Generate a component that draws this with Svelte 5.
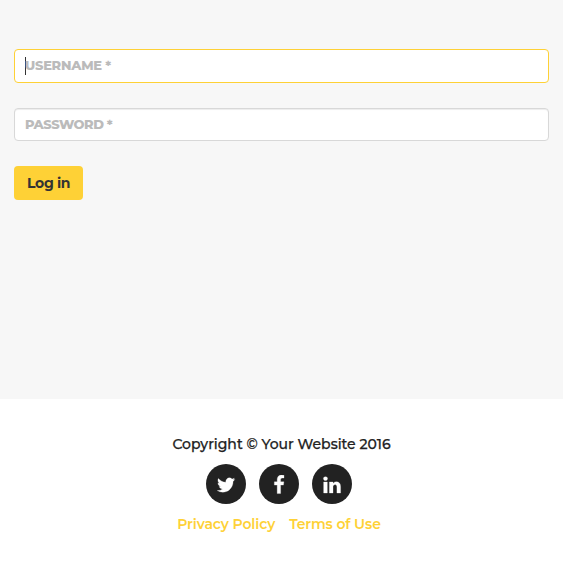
<script>
  const socials = [
    {
      name: 'Twitter',
      d: 'M1684 408q-67 98-162 167 1 14 1 42 0 130-38 259.5t-115.5 248.5-184.5 210.5-258 146-323 54.5q-271 0-496-145 35 4 78 4 225 0 401-138-105-2-188-64.5t-114-159.5q33 5 61 5 43 0 85-11-112-23-185.5-111.5t-73.5-205.5v-4q68 38 146 41-66-44-105-115t-39-154q0-88 44-163 121 149 294.5 238.5t371.5 99.5q-8-38-8-74 0-134 94.5-228.5t228.5-94.5q140 0 236 102 109-21 205-78-37 115-142 178 93-10 186-50z'
    },
    {
      name: 'Facebook',
      d: 'M1343 12v264h-157q-86 0-116 36t-30 108v189h293l-39 296h-254v759h-306v-759h-255v-296h255v-218q0-186 104-288.5t277-102.5q147 0 228 12z'
    },
    {
      name: 'LinkedIn',
      d: 'M477 625v991h-330v-991h330zm21-306q1 73-50.5 122t-135.5 49h-2q-82 0-132-49t-50-122q0-74 51.5-122.5t134.5-48.5 133 48.5 51 122.5zm1166 729v568h-329v-530q0-105-40.5-164.5t-126.5-59.5q-63 0-105.5 34.5t-63.5 85.5q-11 30-11 81v553h-329q2-399 2-647t-1-296l-1-48h329v144h-2q20-32 41-56t56.5-52 87-43.5 114.5-15.5q171 0 275 113.5t104 332.5z'
    }
  ];
</script>

<div class="page">
  <form class="login" onsubmit={(e) => e.preventDefault()}>
    <div class="field focused">
      <span class="caret"></span><span class="user">USERNAME *</span>
    </div>
    <div class="field"><span class="pass">PASSWORD *</span></div>
    <button type="submit"><span>Log in</span></button>
  </form>

  <footer>
    <div class="copyright"><span>Copyright © Your Website 2016</span></div>
    <div class="socials">
      {#each socials as s}
        <a href="#top" aria-label={s.name} class:twitter={s.name === 'Twitter'}>
          <svg viewBox="0 0 1792 1792"><path d={s.d} /></svg>
        </a>
      {/each}
    </div>
    <div class="links">
      <a href="#privacy">Privacy Policy</a>
      <a href="#terms">Terms of Use</a>
    </div>
  </footer>
</div>

<style>
  :global(body) {
    background: #fff;
  }
  .page {
    height: 569px;
    overflow: hidden;
    font-family: Montserrat, Inter, "Liberation Sans", sans-serif;
    font-size: 14px;
    line-height: 20px;
    color: #333;
  }
  .page * {
    box-sizing: border-box;
  }
  span,
  .links a {
    white-space: nowrap;
  }
  .login {
    display: flex;
    flex-direction: column;
    align-items: flex-start;
    height: 399px;
    padding: 49px 14px 0;
    background: #f7f7f7;
  }
  .field {
    display: flex;
    align-items: center;
    width: 100%;
    height: 33px;
    margin-bottom: 25px;
    padding: 0 10px;
    border: 1px solid #d8d8d8;
    border-radius: 4px;
    background: #fff;
    box-shadow: inset 0 1px 1px rgba(0, 0, 0, 0.075);
    font-size: 13px;
    font-weight: 800;
    color: #bbb;
  }
  .focused {
    height: 34px;
    border-color: #fed136;
    box-shadow: none;
  }
  .caret {
    width: 1px;
    height: 18px;
    margin-right: -1px;
    background: #333;
  }
  .user,
  .pass {
    padding-bottom: 2px;
  }
  .user {
    letter-spacing: -0.25px;
  }
  .pass {
    letter-spacing: -0.5px;
  }
  button {
    display: flex;
    align-items: center;
    width: 69px;
    height: 34px;
    padding: 0 0 0 13px;
    border: 0;
    border-radius: 4px;
    background: #fed136;
    color: #333;
    font: 700 14px/20px Montserrat, Inter, "Liberation Sans", sans-serif;
    letter-spacing: -0.35px;
  }
  footer {
    display: flex;
    flex-direction: column;
    align-items: center;
    padding-top: 35px;
    font-weight: 600;
  }
  .copyright {
    height: 30px;
    font-weight: 500;
    color: #222;
    -webkit-text-stroke: 0.25px #222;
  }
  .socials {
    display: flex;
    gap: 13px;
    margin-right: 5px;
  }
  .socials a {
    display: flex;
    align-items: center;
    justify-content: center;
    width: 40px;
    height: 40px;
    padding-top: 2px;
    border-radius: 50%;
    background: #222;
  }
  .socials .twitter {
    padding-right: 1px;
  }
  svg {
    width: 20px;
    height: 20px;
    fill: #fff;
    stroke: #fff;
    stroke-width: 24;
  }
  .links {
    display: flex;
    gap: 14px;
    margin: 10px 5px 0 0;
  }
  .links a {
    color: #fed136;
    text-decoration: none;
    letter-spacing: -0.12px;
  }
</style>
